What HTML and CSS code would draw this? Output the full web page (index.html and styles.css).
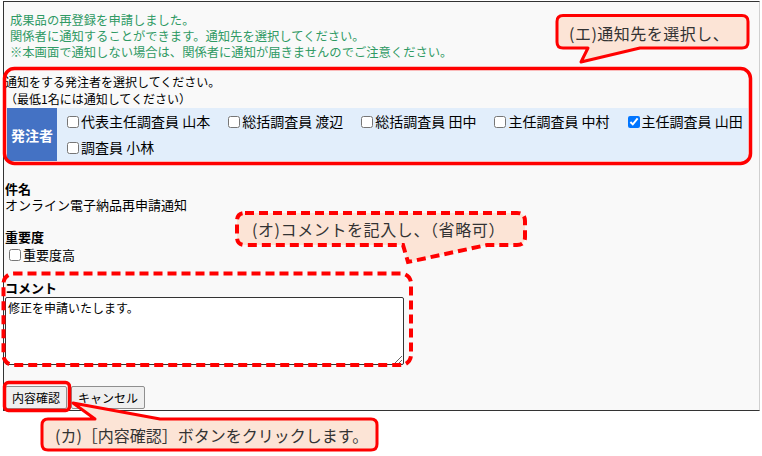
FILE: index.html
```html
<!DOCTYPE html>
<html lang="ja">
<head>
    <meta charset="UTF-8">
    <meta name="viewport" content="width=device-width, initial-scale=1.0">
    <title>成果品再申請通知</title>
    <link rel="stylesheet" href="styles.css">
</head>
<body>
    <div class="screen">
        <!-- Completion message -->
        <div class="notice">
            成果品の再登録を申請しました。<br>
            関係者に通知することができます。通知先を選択してください。<br>
            ※本画面で通知しない場合は、関係者に通知が届きませんのでご注意ください。
        </div>

        <!-- Recipient selection -->
        <div class="notify">
            <p class="notify-lead">通知をする発注者を選択してください。<br>（最低1名には通知してください）</p>
            <table class="recipients">
                <tr>
                    <th>発注者</th>
                    <td>
                        <div class="recipient-list">
                            <label class="recipient"><input type="checkbox">代表主任調査員 山本</label>
                            <label class="recipient"><input type="checkbox">総括調査員 渡辺</label>
                            <label class="recipient"><input type="checkbox">総括調査員 田中</label>
                            <label class="recipient"><input type="checkbox">主任調査員 中村</label>
                            <label class="recipient"><input type="checkbox" checked>主任調査員 山田</label>
                            <label class="recipient"><input type="checkbox">調査員 小林</label>
                        </div>
                    </td>
                </tr>
            </table>
        </div>

        <div class="field field-subject">
            <div class="field-label">件名</div>
            <div class="field-value">オンライン電子納品再申請通知</div>
        </div>

        <div class="field">
            <div class="field-label">重要度</div>
            <label class="field-check"><input type="checkbox">重要度高</label>
        </div>

        <div class="field">
            <div class="field-label">コメント</div>
            <textarea class="comment">修正を申請いたします。</textarea>
        </div>

        <div class="actions">
            <button>内容確認</button>
            <button>キャンセル</button>
        </div>
    </div>

    <!-- Annotation marks drawn over the screen -->
    <svg class="marks" width="762" height="456" viewBox="0 0 762 456">
        <path class="callout" d="M563 15.5H742Q748 15.5 748 21.5V42Q748 48 742 48H640L581 62L588 48H563Q557 48 557 42V21.5Q557 15.5 563 15.5Z"/>
        <rect class="box" x="4.5" y="68.5" width="746" height="95" rx="10"/>
        <rect class="box dashed" x="3.5" y="273.5" width="407.5" height="91.5" rx="10"/>
        <path class="callout dashed" d="M245 213H517Q525 213 525 221V237Q525 245 517 245H487L408 262L403 245H245Q237 245 237 237V221Q237 213 245 213Z"/>
        <rect class="box" x="4.5" y="382.5" width="65" height="28" rx="4"/>
        <path class="callout" d="M48 419H95L73 403L160 419H371Q377 419 377 425V444Q377 450 371 450H48Q42 450 42 444V425Q42 419 48 419Z"/>
    </svg>
    <div class="callout-text step-e">(エ)通知先を選択し、</div>
    <div class="callout-text step-o">(オ)コメントを記入し、（省略可）</div>
    <div class="callout-text step-ka">(カ)［内容確認］ボタンをクリックします。</div>
</body>
</html>
```

FILE: styles.css
```css
/* Screen capture with annotations */
html {
    height: 100%;
}

body {
    box-sizing: border-box;
    height: 100%;
    margin: 0;
    padding: 1px 0 0 3px;
    position: relative;
    overflow: hidden;
    background-color: #fff;
    font-family: "Noto Sans CJK JP", "Noto Sans", sans-serif;
    font-size: 12px;
    color: #000;
}

.screen {
    box-sizing: border-box;
    width: 757px;
    height: 410px;
    padding: 0 0 0 1px;
    border: 1px solid #333;
    border-right-color: #d0d0d0;
    background-color: #f9f9f9;
}

.notice {
    padding: 10px 0 0 5px;
    font-size: 12.3px;
    line-height: 16px;
    color: #2f9a64;
}

.notify {
    margin-top: 13px;
}

.notify-lead {
    margin: 0;
    line-height: 17px;
}

.recipients {
    margin: 1px 0 0 2px;
    width: 741px;
    border-collapse: collapse;
}

.recipients th {
    width: 50px;
    padding: 0;
    background-color: #4472c4;
    color: #fff;
    font-size: 14px;
    font-weight: bold;
    text-align: center;
}

.recipients td {
    padding: 0 0 1px 10px;
    background-color: #e2eefb;
}

.recipient-list {
    display: flex;
    flex-wrap: wrap;
}

.recipient {
    margin-right: 18px;
    line-height: 26px;
    font-size: 14px;
    white-space: nowrap;
}

.recipient:nth-child(5) {
    margin-right: 0;
}

input[type="checkbox"] {
    width: 12px;
    height: 12px;
    margin: 0 2px 0 0;
    vertical-align: -1px;
}

.field {
    margin-top: 15px;
}

.field-subject {
    margin-top: 19px;
}

.field-label {
    font-size: 13px;
    font-weight: bold;
    line-height: 17px;
}

.field-value {
    font-size: 13px;
    line-height: 16px;
}

.field-check {
    display: block;
    padding-left: 4px;
    font-size: 13px;
    line-height: 19px;
}

.comment {
    display: block;
    box-sizing: border-box;
    width: 399px;
    height: 68px;
    margin-top: 1px;
    padding: 2px;
    border: 1px solid #333;
    border-radius: 2px;
    background-color: #fff;
    font-family: inherit;
    font-size: 12px;
    line-height: 15px;
}

.actions {
    margin-top: 21px;
    display: flex;
    gap: 4px;
}

.actions button {
    height: 23px;
    padding: 0 6px;
    border: 1px solid #8f8f8f;
    border-radius: 2px;
    background-color: #efefef;
    font-family: inherit;
    font-size: 12px;
    color: #000;
}

.marks {
    position: absolute;
    top: 0;
    left: 0;
    pointer-events: none;
}

.marks .callout {
    fill: #fce4d6;
    stroke: #ff0000;
    stroke-width: 3;
    stroke-linejoin: round;
}

.marks .box {
    fill: none;
    stroke: #ff0000;
    stroke-width: 3.5;
}

.marks .dashed {
    stroke-width: 4;
    stroke-dasharray: 9 5;
    stroke-linejoin: miter;
}

.callout-text {
    position: absolute;
    font-size: 16px;
    line-height: 20px;
    color: #333;
    white-space: nowrap;
}

.step-e {
    top: 23px;
    left: 569px;
    letter-spacing: 0.5px;
}

.step-o {
    top: 219px;
    left: 252px;
    letter-spacing: 0.6px;
}

.step-ka {
    top: 425px;
    left: 55px;
}
```
